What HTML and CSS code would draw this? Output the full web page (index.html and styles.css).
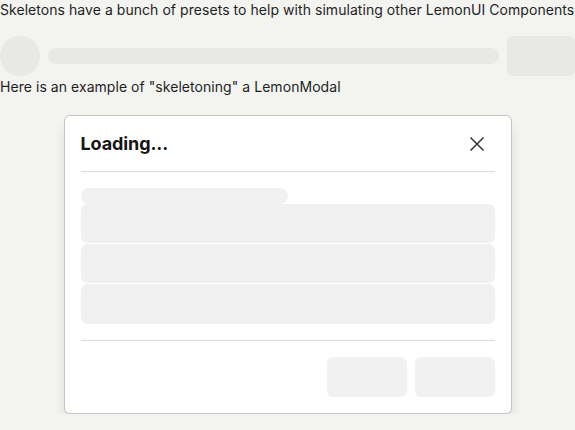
FILE: index.html
```html
<!DOCTYPE html>
<html>
<head>
<meta charset="utf-8">
<link rel="stylesheet" href="styles.css">
</head>
<body>
<p class="text">Skeletons have a bunch of presets to help with simulating other LemonUI Components</p>
<div class="row">
  <div class="sk sk-circle"></div>
  <div class="sk sk-bar"></div>
  <div class="sk sk-button"></div>
</div>
<p class="text">Here is an example of "skeletoning" a LemonModal</p>
<div class="modal">
  <div class="modal-header">
    <h3 class="modal-title">Loading...</h3>
    <button class="close" aria-label="close">
      <svg width="16" height="16" viewBox="0 0 16 16"><path d="M1.5 1.5L14.5 14.5M14.5 1.5L1.5 14.5" stroke="#333" stroke-width="1.5" fill="none"/></svg>
    </button>
  </div>
  <div class="modal-body">
    <div class="msk msk-line"></div>
    <div class="msk msk-block"></div>
    <div class="msk msk-block"></div>
    <div class="msk msk-block"></div>
  </div>
  <div class="modal-footer">
    <div class="msk msk-btn"></div>
    <div class="msk msk-btn"></div>
  </div>
</div>
</body>
</html>
```
FILE: styles.css
```css
html, body {
  margin: 0;
  padding: 0;
}
body {
  background: #f3f3ef;
  font-family: Inter, "Liberation Sans", sans-serif;
  font-size: 14px;
  line-height: 20px;
  color: #1f1f1f;
}
.text {
  margin: 0;
  white-space: nowrap;
  letter-spacing: 0.05px;
}
.row {
  display: flex;
  align-items: center;
  gap: 8px;
  margin: 16px 0 1px;
}
.sk {
  background: #e8e8e6;
}
.sk-circle {
  width: 40px;
  height: 40px;
  border-radius: 50%;
  flex: none;
}
.sk-bar {
  flex: 1;
  height: 16px;
  border-radius: 8px;
}
.sk-button {
  width: 68px;
  height: 40px;
  border-radius: 6px;
  flex: none;
}
.modal {
  width: 446px;
  margin: 18px auto 0;
  background: #fff;
  border: 1px solid #c4c4c2;
  border-radius: 6px;
  box-shadow: 0 10px 14px -4px rgba(0,0,0,0.18);
}
.modal-header {
  margin: 0 16px;
  padding: 16px 0 15px;
  display: flex;
  align-items: center;
  justify-content: space-between;
  border-bottom: 1px solid #dddcd8;
}
.modal-title {
  margin: 0;
  font-size: 18px;
  line-height: 24px;
  font-weight: 700;
  color: #151515;
  letter-spacing: -0.1px;
}
.close {
  border: 0;
  background: none;
  padding: 0;
  margin-right: 10px;
  width: 16px;
  height: 16px;
  display: flex;
}
.modal-body {
  margin: 0 16px;
  padding: 16px 0;
  border-bottom: 1px solid #dddcd8;
  display: flex;
  flex-direction: column;
}
.msk {
  background: #f1f1f1;
  border-radius: 6px;
}
.msk-line {
  width: 50%;
  height: 16px;
  border-radius: 8px;
}
.msk-block {
  height: 39px;
  margin-bottom: 1px;
}
.modal-body .msk-block:last-child {
  margin-bottom: 0;
  height: 40px;
}
.modal-footer {
  padding: 16px;
  display: flex;
  justify-content: flex-end;
  gap: 8px;
}
.msk-btn {
  width: 80px;
  height: 40px;
}
```
